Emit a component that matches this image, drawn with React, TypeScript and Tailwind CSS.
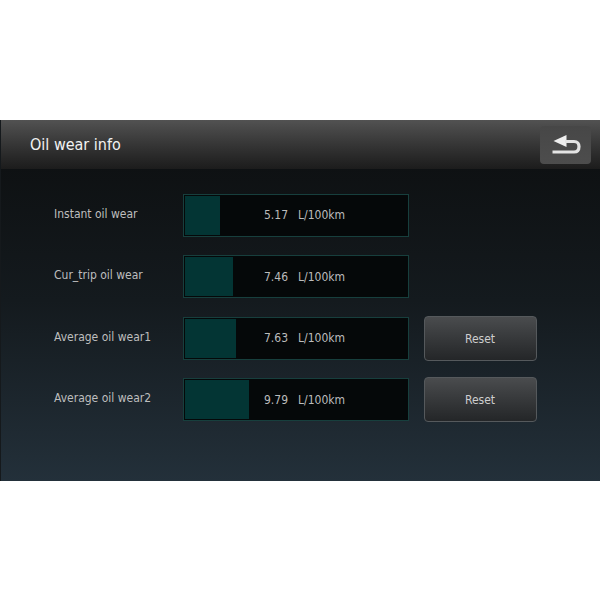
const rows = [
  { label: "Instant oil wear", value: "5.17", fill: 35, reset: false },
  { label: "Cur_trip oil wear", value: "7.46", fill: 48, reset: false },
  { label: "Average oil wear1", value: "7.63", fill: 51, reset: true },
  { label: "Average oil wear2", value: "9.79", fill: 64, reset: true },
];

function BackIcon() {
  return (
    <svg width="34" height="22" viewBox="0 0 34 22" fill="none">
      <path d="M4.5 7 L17.5 1 L17.5 13 Z" fill="#eeeeee" />
      <path d="M16 7.5 H25 C28.5 7.5 30 10 30 12.5 C30 16 28 18 25 18 H3.5" stroke="#e4e4e4" strokeWidth="3.2" />
    </svg>
  );
}

export default function App() {
  return (
    <div className="h-[600px] w-[600px] overflow-hidden bg-white font-['DejaVu_Sans','Liberation_Sans',sans-serif] font-stretch-condensed">
      <div className="h-[120px]" />
      <div className="flex h-[361px] flex-col border-l border-[#15191c] bg-gradient-to-b from-[#0c0e0f] via-[#141a1e] to-[#23303a]">
        {/* Title bar */}
        <div className="flex h-[49px] items-center justify-between bg-gradient-to-b from-[#525252] to-[#1c1c1c] pl-[29px] pr-[9px]">
          <h1 className="text-[16px] text-[#f2f2f2]">Oil wear info</h1>
          <button className="flex h-[38px] w-[51px] items-center justify-center rounded-[4px] bg-gradient-to-b from-[#474747] to-[#4d4d4d]">
            <BackIcon />
          </button>
        </div>

        <div className="flex flex-col gap-[18.5px] pt-[24.6px]">
          {rows.map((row) => (
            <div key={row.label} className="flex h-[43px] items-center">
              <span className="w-[182px] pb-[3px] pl-[53px] text-[12px] text-[#bebebe]">{row.label}</span>
              <div className="flex h-[43px] w-[226px] border border-[#173f3d] bg-[#050809] p-[1px]">
                <div className="relative flex flex-1 items-center">
                  <div className="h-full bg-[#033534]" style={{ width: row.fill }} />
                  <span className="absolute left-[79px] mt-[0.5px] text-[12px] text-[#bcbcbc]">
                    {row.value}
                    <span className="ml-[10px]">L/100km</span>
                  </span>
                </div>
              </div>
              {row.reset && (
                <button className="ml-[15px] h-[45px] w-[113px] rounded-[4px] border border-[#55595c] bg-gradient-to-b from-[#4a4c4e] to-[#242628] pt-[1px] pr-[1px] text-[12px] text-[#cecece]">
                  Reset
                </button>
              )}
            </div>
          ))}
        </div>
      </div>
    </div>
  );
}
